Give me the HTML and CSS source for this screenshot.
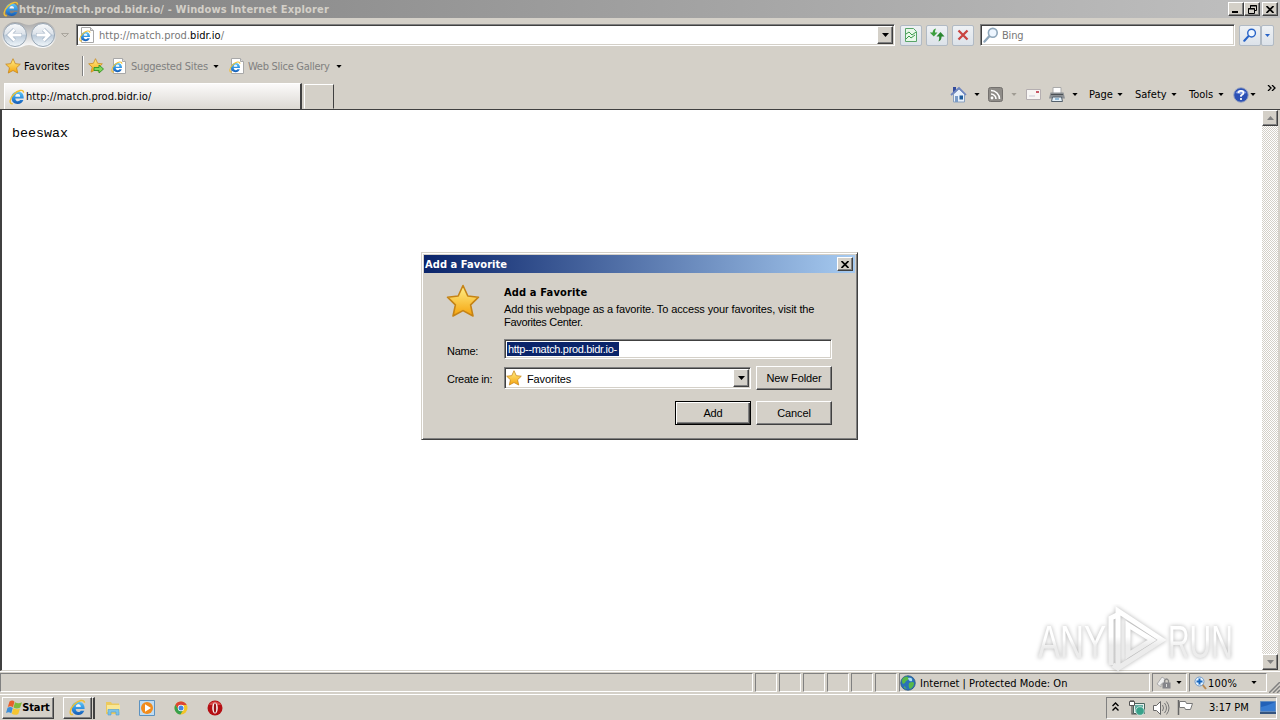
FILE: index.html
```html
<!DOCTYPE html>
<html lang="en">
<head>
    <meta charset="UTF-8">
    <title>http://match.prod.bidr.io/ - Windows Internet Explorer</title>
    <link rel="stylesheet" href="styles.css">
</head>
<body>
    <!-- Shared icons -->
    <svg class="defs" width="0" height="0">
        <defs>
            <linearGradient id="gold" x1="0" y1="0" x2="0" y2="1">
                <stop offset="0" stop-color="#fff08a"/>
                <stop offset="1" stop-color="#f5a30c"/>
            </linearGradient>
            <linearGradient id="blue" x1="0" y1="0" x2="0" y2="1">
                <stop offset="0" stop-color="#5cc8f8"/>
                <stop offset="0.6" stop-color="#2a88dc"/>
                <stop offset="1" stop-color="#1459b0"/>
            </linearGradient>
            <linearGradient id="disc" x1="0" y1="0" x2="0" y2="1">
                <stop offset="0" stop-color="#f8fafc"/>
                <stop offset="0.45" stop-color="#dde3ea"/>
                <stop offset="0.52" stop-color="#bccbda"/>
                <stop offset="1" stop-color="#f2f8fc"/>
            </linearGradient>
            <linearGradient id="plate" x1="0" y1="0" x2="0" y2="1">
                <stop offset="0" stop-color="#a8a8a8"/>
                <stop offset="1" stop-color="#fff"/>
            </linearGradient>
            <linearGradient id="fade" x1="0" y1="0" x2="0" y2="1">
                <stop offset="0.45" stop-color="#fff"/>
                <stop offset="0.6" stop-color="#ececec"/>
            </linearGradient>
        </defs>
        <symbol id="ie" viewBox="0 0 16 16">
            <path fill-rule="evenodd" d="M8.600 2.600C12.600 2.600 14.900 5.200 14.700 9.400H6.300C6.500 11.300 7.500 12.200 8.900 12.200C10 12.200 10.700 11.700 11.100 11H14.400C13.400 13.600 11.400 15 8.600 15C5 15 2.500 12.600 2.500 8.800C2.500 5 5 2.600 8.600 2.600ZM6.400 7.400H11.100C10.900 5.800 10 5 8.800 5S6.700 5.800 6.400 7.400Z" fill="url(#blue)"/>
            <path d="M6.400 7.400H11.100C10.900 5.800 10 5 8.800 5S6.700 5.800 6.400 7.400Z" fill="#f2f6fa"/>
            <path d="M3.800 14.600C-.4 15.400 .6 9.400 4.800 5.200C8.800 1.200 14.400 -.2 14.600 3.600" fill="none" stroke="#f0bf35" stroke-width="1.400"/>
        </symbol>
        <symbol id="page-ie" viewBox="0 0 16 16">
            <path d="M2.500 .5h9l3 3v12h-12z" fill="#fff" stroke="#a8a8a8"/>
            <path d="M11.500 .5v3h3" fill="#ddd" stroke="#a8a8a8"/>
            <use href="#ie" x="0" y="3" width="12" height="12"/>
        </symbol>
        <symbol id="star" viewBox="0 0 34 34">
            <path d="M17 1.500L21.800 12L32.500 13.200L24.600 20.800L27 32L17 26.600L7 32L9.400 20.800L1.500 13.200L12.200 12Z" fill="url(#gold)" stroke="#c58316" stroke-width="1.600" stroke-linejoin="round"/>
        </symbol>
        <symbol id="down" viewBox="0 0 7 4"><path d="M0 0h7L3.500 4z" fill="currentColor"/></symbol>
        <symbol id="up" viewBox="0 0 7 4"><path d="M0 4h7L3.500 0z" fill="currentColor"/></symbol>
        <symbol id="lens" viewBox="0 0 16 16">
            <path d="M1.500 14.500L6.500 9" stroke="currentColor" stroke-width="2.400" stroke-linecap="round"/>
            <circle cx="9.800" cy="5.800" r="4.400" fill="#eef6ff" stroke="currentColor" stroke-width="1.600"/>
        </symbol>
        <symbol id="close" viewBox="0 0 8 7"><path d="M.5 0L7.500 7M7.500 0L.5 7" stroke="#000" stroke-width="1.700"/></symbol>
    </svg>

    <div class="titlebar">
        <svg class="i16"><use href="#ie"/></svg>
        <span class="title-text">http://match.prod.bidr.io/ - Windows Internet Explorer</span>
        <div class="win-btn"><svg width="8" height="8"><path d="M0 7h6" stroke="#000" stroke-width="2"/></svg></div>
        <div class="win-btn"><svg width="9" height="9"><path d="M2.500 3V.5h6v5H7M2 1h7M.5 3.500h6v5h-6zM0 4h7" fill="none" stroke="#000"/></svg></div>
        <div class="win-btn win-close"><svg width="8" height="7"><use href="#close"/></svg></div>
    </div>

    <div class="navbar">
        <svg class="travel" width="72" height="28" viewBox="0 0 72 28">
            <path d="M14 1C22 1 22 4 28 4S34 1 42 1A13 13 0 0 1 42 27C34 27 34 24 28 24S22 27 14 27A13 13 0 0 1 14 1Z" fill="url(#plate)"/>
            <circle cx="14" cy="14" r="11.500" fill="url(#disc)" stroke="#98a6b4"/>
            <circle cx="42" cy="14" r="11.500" fill="url(#disc)" stroke="#98a6b4"/>
            <path d="M21 14H9M13.500 8.500L8 14l5.500 5.500M35 14h12M42.500 8.500L48 14l-5.500 5.500" fill="none" stroke="#a3b3c5" stroke-width="4.200"/>
            <path d="M20.500 14H9M13.500 8.500L8 14l5.500 5.500M35.500 14h12M42.500 8.500L48 14l-5.500 5.500" fill="none" stroke="#fff" stroke-width="2.800"/>
            <path d="M60.500 12.500h7l-3.500 3.500z" fill="#d4d0c8" stroke="#aaa69e"/>
        </svg>
        <div class="address sunken">
            <svg class="i16"><use href="#page-ie"/></svg>
            <span class="url">http://match.prod.<b>bidr.io</b>/</span>
            <div class="drop-btn"><svg class="arrow"><use href="#down"/></svg></div>
        </div>
        <div class="tool-btn"><svg width="14" height="16"><path d="M1.500 1.500h8l3 3v10h-11z" fill="#e9f8e9" stroke="#58a468"/><path d="M2 7l3-2 3 3 4-3M2 12l3-3 2 2 4-3" fill="none" stroke="#3b9a4a"/></svg></div>
        <div class="tool-btn"><svg width="16" height="14"><path d="M7 .5Q4 1 3.600 4.500H.8l4 4 3.700-4H6Q6 2.500 7 .5z" fill="#3d9f3f"/><path d="M9.500 13.500Q12.500 12.500 12.600 8.500H15.500l-4-4.500L7.500 8.500h2.700Q10.500 11 9.500 13.500z" fill="#2a8630"/></svg></div>
        <div class="tool-btn"><svg width="12" height="12"><path d="M1.500 1.500l9 9M10.500 1.500l-9 9" stroke="#c94440" stroke-width="2.300"/></svg></div>
        <div class="search sunken">
            <svg class="i16"><use href="#lens"/></svg>
            <span>Bing</span>
        </div>
        <div class="tool-btn search-go"><svg width="14" height="14"><use href="#lens"/></svg></div>
        <div class="tool-btn search-more"><svg width="5" height="3"><use href="#down"/></svg></div>
    </div>

    <div class="favbar">
        <svg class="i16"><use href="#star"/></svg>
        <span class="fav-label">Favorites</span>
        <div class="fav-sep"></div>
        <svg class="i16 fav-add" viewBox="0 0 16 16"><use href="#star" width="15" height="15"/><path d="M6 9.500h5V7l4.500 4-4.500 4v-2.500H6z" fill="#7fd65a" stroke="#2f9324" stroke-width=".9"/></svg>
        <svg class="i16"><use href="#page-ie"/></svg>
        <span class="fav-link suggested">Suggested Sites</span>
        <svg class="arrow small"><use href="#down"/></svg>
        <svg class="i16 slice"><use href="#page-ie"/></svg>
        <span class="fav-link gallery">Web Slice Gallery</span>
        <svg class="arrow small"><use href="#down"/></svg>
    </div>

    <div class="tabbar">
        <div class="tab"><svg class="i16"><use href="#ie"/></svg><span>http://match.prod.bidr.io/</span></div>
        <div class="new-tab"></div>
        <div class="commands">
            <svg class="cmd-home" width="17" height="17" viewBox="0 0 17 17"><path d="M3 1h3v6H3z" fill="#334b9c"/><path d="M3.500 8v8h11V8L9 3z" fill="#e9f1fb" stroke="#8aa0bd"/><path d="M1 9l8-7 7 7" fill="none" stroke="#6f86c0" stroke-width="1.700"/><path d="M5 10h3v6H5z" fill="#7a9cc8"/><path d="M9.500 9.500h3.500v4H9.500z" fill="#1f5c9c"/></svg>
            <svg class="arrow small"><use href="#down"/></svg>
            <svg class="cmd-rss" width="15" height="15"><rect x=".5" y=".5" width="14" height="14" rx="2" fill="#8f8c88" stroke="#74716e"/><path d="M3 7a5 5 0 0 1 5 5M3 3.500A8.500 8.500 0 0 1 11.500 12" fill="none" stroke="#fff" stroke-width="1.600"/><circle cx="4" cy="11" r="1.400" fill="#fff"/></svg>
            <svg class="arrow small muted"><use href="#down"/></svg>
            <svg class="cmd-mail" width="15" height="11"><path d="M.5 .5h14v10H.5z" fill="#f8f6f4" stroke="#b4aeb0"/><path d="M10 2h3v2h-3z" fill="#c85a68"/><path d="M3 7h6" stroke="#c9c9d4"/></svg>
            <svg class="cmd-print" width="16" height="15"><path d="M4 .5h8v6H4z" fill="#fff" stroke="#aaa"/><path d="M1.500 5.500h13l1.500 6H0z" fill="#8c9094"/><path d="M2 7.500h12" stroke="#4c5155"/><path d="M3.500 10h9l1 4.500h-11z" fill="#e4f0f8" stroke="#55616c"/><path d="M6 12h4" stroke="#4686b5"/></svg>
            <svg class="arrow small"><use href="#down"/></svg>
            <span class="cmd page">Page</span><svg class="arrow small"><use href="#down"/></svg>
            <span class="cmd safety">Safety</span><svg class="arrow small"><use href="#down"/></svg>
            <span class="cmd tools">Tools</span><svg class="arrow small"><use href="#down"/></svg>
            <svg class="cmd-help" width="16" height="16" viewBox="0 0 16 16"><circle cx="8" cy="8" r="7.300" fill="#2c51b5" stroke="#a0a9c0"/><path d="M2.500 6A6 5 0 0 1 13.500 6Q8 8 2.500 6" fill="#7f9be4"/><path d="M5.500 6Q5.500 3.800 8 3.800T10.500 6Q10.500 7.200 8 8.600V9.800M8 11v2" fill="none" stroke="#fff" stroke-width="1.700"/></svg>
            <svg class="arrow small"><use href="#down"/></svg>
            <svg class="chevrons" width="9" height="6"><path d="M1 0l3 3-3 3M5 0l3 3-3 3" fill="none" stroke="#000" stroke-width="1.300"/></svg>
        </div>
    </div>

    <div class="viewport">
        <pre class="document">beeswax</pre>
        <div class="scrollbar">
            <div class="scroll-btn"><svg class="arrow"><use href="#up"/></svg></div>
            <div class="scroll-btn"><svg class="arrow"><use href="#down"/></svg></div>
        </div>
        <svg class="watermark" width="210" height="76" viewBox="0 0 210 76">
            <g class="mark">
                <text transform="translate(7 54) scale(.72 1)">ANY</text>
                <text transform="translate(137 54) scale(.65 1)">RUN</text>
                <path d="M80 61V14l6-3M87 63V7l44 29-44 28-5-3M97 21v30l24-15z"/>
            </g>
        </svg>
    </div>

    <div class="statusbar">
        <div class="pane main"></div>
        <div class="pane"></div><div class="pane"></div><div class="pane"></div>
        <div class="pane"></div><div class="pane"></div><div class="pane"></div>
        <div class="pane zone">
            <svg class="i16" viewBox="0 0 16 16"><circle cx="8" cy="8" r="7.300" fill="#2a72b8" stroke="#26517c" stroke-width=".7"/><path d="M3 3q4-3 6 0 0 2-3 3-1 3-3 3-2-3 0-6M9 8q4-2 5 0 0 4-4 6-2-2-1-6M4 11l3 3-3-1z" fill="#58b848"/><path d="M8 3q5-1 4 3-3 1-4-3" fill="#a9dcf5"/></svg>
            <span>Internet | Protected Mode: On</span>
        </div>
        <div class="pane lock">
            <svg width="16" height="15"><path d="M1 9l5-7 3 2v5H5v3z" fill="#eee" stroke="#aaa"/><path d="M8.500 8V5.500q2-3 4 0V8" fill="none" stroke="#888" stroke-width="1.300"/><path d="M6.500 7.500h8v6h-8z" fill="#85858a"/><path d="M10.500 9v3" stroke="#ddd"/></svg>
            <svg class="arrow small"><use href="#down"/></svg>
        </div>
        <div class="pane zoom">
            <svg width="13" height="14"><path d="M8 8l4 5" stroke="#b98a55" stroke-width="2"/><circle cx="5.500" cy="5.500" r="4.500" fill="#e5f3ff" stroke="#7199c7"/><path d="M5.500 2.500v6M2.500 5.500h6" stroke="#1766bd" stroke-width="2"/></svg>
            <span>100%</span>
            <svg class="arrow small"><use href="#down"/></svg>
        </div>
        <svg class="grip" width="11" height="11"><path d="M0 11L11 0M4 11l7-7M8 11l3-3" stroke="#808080" stroke-width="1.500"/></svg>
    </div>

    <div class="taskbar">
        <div class="start raised">
            <svg width="16" height="16" viewBox="0 0 16 16"><path d="M3.500 1.500q3-2 5 .3L7 7.300Q4.500 5.200 1.800 7z" fill="#e8602c"/><path d="M9 2.200q3.500 2 7 0L14.200 7.500q-3.500 2-6.700 0z" fill="#7fbb3c"/><path d="M1.500 7.700Q4.500 6.200 6.800 8L5.300 13.300Q3 11.500 0 13z" fill="#3c8ed8"/><path d="M7.300 8.300q3.500 2 6.700.2L12.300 14q-3.500 1.800-6.500-.2z" fill="#f6c531"/></svg>
            <span>Start</span>
        </div>
        <div class="task raised"><svg width="17" height="17"><use href="#ie"/></svg></div>
        <div class="task-stack"></div>
        <svg class="i16 explorer" viewBox="0 0 16 16"><path d="M1 2h5l1 1.500h7V14H1z" fill="#ecc95d"/><path d="M2 5h13v7H2z" fill="#f9e795"/><path d="M3 15V9.500h11V15h-3v-3H6v3z" fill="#7cc3e8" stroke="#539ccc" stroke-width=".6"/></svg>
        <svg class="i16" viewBox="0 0 16 16"><path d="M.5 .5h15v15H.5z" fill="#c0dcf2" stroke="#5c92c0"/><circle cx="8" cy="8" r="6" fill="#f28c1c"/><path d="M6 4.200v7.600L12 8z" fill="#fff"/></svg>
        <svg class="i16" viewBox="0 0 16 16"><circle cx="8" cy="8" r="6.500" fill="#f2c429"/><path d="M2.400 4.700A6.500 6.500 0 0 1 13.700 5H8v3L5.400 9.500z" fill="#dc4434"/><path d="M2.400 4.700A6.500 6.500 0 0 0 7.400 14.500L10.500 9.500H5.400z" fill="#37a04c"/><circle cx="8" cy="8" r="3.200" fill="#fff"/><circle cx="8" cy="8" r="2.500" fill="#4285e4"/></svg>
        <svg class="i16" viewBox="0 0 16 16"><circle cx="8" cy="8" r="7.500" fill="#b50f14"/><path d="M2 5a7 7 0 0 1 12 0z" fill="#d94a4a"/><ellipse cx="8" cy="8" rx="2.800" ry="5.500" fill="#f8f0f0"/><ellipse cx="8" cy="8" rx="1.200" ry="4.700" fill="#981015"/></svg>
        <div class="tray">
            <svg class="tray-up" width="7" height="9"><path d="M.5 4l3-3 3 3M.5 8.500l3-3 3 3" fill="none" stroke="#000" stroke-width="1.400"/></svg>
            <svg class="tray-net" width="16" height="16"><path d="M4.500 3.500h11v10h-11z" fill="#e8f0ee" stroke="#47665f"/><path d="M6 5h8v7H6z" fill="#63ada2"/><path d="M.5 1.500h5v4h-5z" fill="#fff" stroke="#555"/><path d="M3 5v9h6M2 0v2M4 0v2" fill="none" stroke="#555" stroke-width="1.200"/><circle cx="11" cy="11" r="4.300" fill="#38a28a" stroke="#e4f1ec" stroke-width=".7"/></svg>
            <svg class="tray-vol" width="17" height="16"><path d="M.5 5.500h3l4-4v13l-4-4h-3z" fill="#fff" stroke="#666"/><path d="M9.500 5q2 3 0 6M11.500 3q4 5 0 10M13.500 1.500q5 6.500 0 13" fill="none" stroke="#777"/></svg>
            <svg class="tray-flag" width="16" height="15"><path d="M1.500 0v15" stroke="#666" stroke-width="1.500"/><path d="M2.500 1.500h6l1 2h6l-2 6h-5l-1-2h-5z" fill="#fff" stroke="#777"/></svg>
            <span class="clock">3:17 PM</span>
            <svg width="16" height="13"><path d="M.5 .5h15v10H.5z" fill="#2361b7" stroke="#638cbd"/><path d="M1 6q8-2 14-5v9H1z" fill="#387bd0"/><path d="M0 12h16" stroke="#34547e" stroke-width="2"/></svg>
        </div>
    </div>

    <div class="dialog">
        <div class="dialog-title">
            <span>Add a Favorite</span>
            <div class="win-btn"><svg width="8" height="7"><use href="#close"/></svg></div>
        </div>
        <div class="dialog-body">
            <div class="intro">
                <svg width="34" height="34"><use href="#star"/></svg>
                <div>
                    <div class="heading">Add a Favorite</div>
                    <div class="hint">Add this webpage as a favorite. To access your favorites, visit the<br><span class="hint-end">Favorites Center.</span></div>
                </div>
            </div>
            <div class="row name-row">
                <label>Name:</label>
                <div class="field sunken"><span class="selected">http--match.prod.bidr.io-</span></div>
            </div>
            <div class="row folder-row">
                <label>Create in:</label>
                <div class="select sunken">
                    <svg class="i16"><use href="#star"/></svg>
                    <span>Favorites</span>
                    <div class="drop-btn"><svg class="arrow"><use href="#down"/></svg></div>
                </div>
                <div class="btn raised"><span>New Folder</span></div>
            </div>
            <div class="row actions">
                <div class="btn raised default"><span>Add</span></div>
                <div class="btn raised"><span>Cancel</span></div>
            </div>
        </div>
    </div>
</body>
</html>
```
FILE: styles.css
```css
* {
    box-sizing: border-box;
}

body {
    margin: 0;
    width: 1280px;
    height: 720px;
    overflow: hidden;
    display: flex;
    flex-direction: column;
    position: relative;
    background: #d4d0c8;
    color: #000;
    font: 11px/14px "DejaVu Sans Condensed", "DejaVu Sans", sans-serif;
    white-space: nowrap;
}

svg {
    display: block;
    flex: none;
}

.defs {
    position: absolute;
}

.i16 {
    width: 16px;
    height: 16px;
}

.arrow {
    width: 7px;
    height: 4px;
}

.arrow.small {
    width: 6px;
    height: 3px;
}

.muted {
    color: #a09c94;
}

.sunken {
    background: #fff;
    border: 1px solid;
    border-color: #808080 #fff #fff #808080;
    box-shadow: inset 1px 1px #404040, inset -1px -1px #d4d0c8;
}

.raised,
.win-btn,
.drop-btn,
.scroll-btn {
    background: #d4d0c8;
    border: 1px solid;
    border-color: #fff #404040 #404040 #fff;
    box-shadow: inset -1px -1px #808080;
    display: flex;
    align-items: center;
    justify-content: center;
    flex: none;
}

/* Title bar */
.titlebar {
    height: 18px;
    flex: none;
    display: flex;
    align-items: center;
    padding: 0 2px 0 3px;
    background: linear-gradient(90deg, #808080, #c0c0c0);
    color: #d4d0c8;
    font-weight: bold;
}

.title-text {
    flex: 1;
    padding-top: 1px;
    letter-spacing: 0.15px;
}

.win-btn {
    width: 16px;
    height: 14px;
}

.win-close {
    margin-left: 2px;
}

/* Address row */
.navbar {
    height: 34px;
    flex: none;
    display: flex;
    align-items: center;
    padding-left: 1px;
}

.travel {
    margin-right: 3px;
}

.address {
    width: 819px;
    height: 22px;
    display: flex;
    align-items: center;
    padding: 1px 1px 1px 2px;
    margin-right: 5px;
}

.url {
    flex: 1;
    margin-left: 4px;
    padding-top: 2px;
    letter-spacing: 0.04px;
    color: #777;
}

.url b {
    font-weight: normal;
    color: #000;
}

.drop-btn {
    width: 16px;
    height: 18px;
}

.tool-btn {
    width: 22px;
    height: 21px;
    margin-right: 4px;
    display: flex;
    align-items: center;
    justify-content: center;
    flex: none;
    border: 1px solid #b1bac4;
    border-radius: 2px;
    background: linear-gradient(#eef1f4, #dce2e9);
}

.search {
    width: 255px;
    height: 22px;
    margin: 0 4px 0 2px;
    display: flex;
    align-items: center;
    padding-left: 2px;
    color: #777;
}

.search svg {
    color: #8fa7bb;
    margin-right: 3px;
}

.search span {
    padding-top: 2px;
    letter-spacing: -0.2px;
}

.search-go {
    margin: 0;
    color: #2763c7;
}

.search-more {
    width: 13px;
    margin: 0;
    color: #2763c7;
}

/* Favorites bar */
.favbar {
    height: 28px;
    flex: none;
    display: flex;
    align-items: center;
    padding-left: 5px;
}

.fav-label {
    width: 58px;
    margin-left: 3px;
    padding-top: 1px;
    letter-spacing: 0.1px;
}

.fav-sep {
    width: 2px;
    height: 20px;
    border-left: 1px solid #808080;
    border-right: 1px solid #fff;
}

.fav-add {
    margin: 0 7px 0 4px;
}

.fav-link {
    margin-left: 4px;
    padding-top: 2px;
    color: #808080;
    letter-spacing: -0.2px;
}

.suggested {
    width: 82px;
}

.gallery {
    width: 88px;
    margin-left: 3px;
    letter-spacing: -0.28px;
}

.slice {
    margin-left: 10px;
}

/* Tabs and command bar */
.tabbar {
    height: 29px;
    flex: none;
    display: flex;
    align-items: flex-end;
    padding-left: 4px;
}

.tab {
    width: 298px;
    height: 26px;
    display: flex;
    align-items: center;
    padding-left: 4px;
    border-top: 1px solid #fff;
    border-left: 1px solid #fff;
    border-right: 2px solid #404040;
    background: linear-gradient(#fbfafa, #dcd9d3);
}

.tab span {
    margin-left: 1px;
    letter-spacing: 0.05px;
}

.new-tab {
    width: 30px;
    height: 25px;
    margin-left: 2px;
    border: 1px solid;
    border-color: #fff #404040 transparent #fff;
}

.commands {
    flex: 1;
    height: 29px;
    display: flex;
    align-items: center;
    padding-left: 616px;
}

.cmd-home {
    margin-right: 7px;
}

.cmd-rss {
    margin: 0 8px 0 8px;
}

.cmd-mail {
    margin: 0 8px 0 9px;
}

.cmd-print {
    margin-right: 7px;
}

.cmd {
    margin-left: 11px;
}

.page {
    width: 28px;
}

.safety {
    width: 36px;
    margin-left: 12px;
}

.tools {
    width: 29px;
    margin-left: 12px;
}

.cmd-help {
    margin: 0 1px 0 9px;
}

.chevrons {
    margin: 0 0 13px 11px;
}

/* Page area */
.viewport {
    height: 562px;
    flex: none;
    display: flex;
    position: relative;
    background: #fff;
    border-top: 1px solid #404040;
    border-left: 2px solid #404040;
    border-bottom: 1px solid #d4d0c8;
}

.document {
    flex: 1;
    margin: 16px 0 0 10px;
    font: 13.33px/15px "Liberation Mono", monospace;
}

.scrollbar {
    width: 18px;
    display: flex;
    flex-direction: column;
    justify-content: space-between;
    border-right: 2px solid #d4d0c8;
    background: repeating-conic-gradient(#fff 0 25%, #d4d0c8 0 50%) 0 0 / 2px 2px;
}

.scroll-btn {
    width: 16px;
    height: 16px;
    color: #808080;
}

.watermark {
    position: absolute;
    left: 1029px;
    top: 494px;
}

.mark {
    font: 46px "Liberation Sans", sans-serif;
    fill: url(#fade);
    filter: drop-shadow(0 0 2px rgba(0, 0, 0, 0.3));
}

.mark path {
    fill: none;
    stroke: url(#fade);
    stroke-width: 5;
}

/* Status bar */
.statusbar {
    height: 23px;
    flex: none;
    display: flex;
    align-items: center;
    gap: 2px;
    border-top: 1px solid #fff;
    border-bottom: 1px solid #d4d0c8;
}

.pane {
    width: 22px;
    height: 19px;
    display: flex;
    align-items: center;
    flex: none;
    border: 1px solid;
    border-color: #808080 #fff #fff #808080;
}

.main {
    width: 753px;
}

.zone {
    width: 251px;
}

.zone span {
    margin-left: 4px;
    padding-top: 2px;
    letter-spacing: 0.02px;
}

.lock {
    width: 35px;
    padding-left: 3px;
    gap: 4px;
}

.zoom {
    width: 78px;
    padding-left: 4px;
}

.zoom span {
    width: 43px;
    margin-left: 1px;
    padding-top: 2px;
    letter-spacing: 0.2px;
}

.grip {
    align-self: flex-end;
}

/* Taskbar */
.taskbar {
    height: 26px;
    flex: none;
    display: flex;
    align-items: center;
    padding-left: 2px;
    border-top: 1px solid #fff;
}

.start {
    width: 52px;
    height: 22px;
    font-weight: bold;
}

.start span {
    letter-spacing: -0.15px;
}

.task {
    width: 29px;
    height: 22px;
    margin-left: 9px;
}

.task-stack {
    width: 3px;
    height: 22px;
    border-top: 1px solid #fff;
    border-right: 2px solid #404040;
}

.taskbar > .i16 {
    margin-right: 18px;
}

.taskbar > .explorer {
    margin-left: 10px;
}

.tray {
    width: 171px;
    height: 22px;
    margin: 0 3px 0 auto;
    padding-left: 5px;
    display: flex;
    align-items: center;
    border: 1px solid;
    border-color: #808080 #fff #fff #808080;
}

.tray-up {
    margin-bottom: 3px;
}

.tray-net {
    margin-left: 10px;
}

.tray-vol {
    margin-left: 8px;
}

.tray-flag {
    margin-left: 7px;
}

.clock {
    width: 51px;
    margin-left: 16px;
}

/* Add a Favorite dialog */
.dialog {
    position: absolute;
    left: 421px;
    top: 252px;
    width: 437px;
    height: 188px;
    padding: 2px;
    background: #d4d0c8;
    border: 1px solid;
    border-color: #d4d0c8 #404040 #404040 #d4d0c8;
    box-shadow: inset 1px 1px #fff, inset -1px -1px #808080;
    font: 11px/13px "Liberation Sans", Arial, sans-serif;
    letter-spacing: -0.11px;
}

.dialog-title {
    height: 18px;
    display: flex;
    align-items: center;
    justify-content: space-between;
    padding: 0 2px 0 1px;
    background: linear-gradient(90deg, #0a246a, #a6caf0);
    color: #fff;
    font: bold 11px/14px "DejaVu Sans Condensed", sans-serif;
    letter-spacing: 0.07px;
}

.dialog-title span {
    padding-top: 1px;
}

.dialog-body {
    padding: 12px 23px 0 22px;
}

.intro {
    display: flex;
    height: 54px;
}

.intro > svg {
    margin-top: -1px;
}

.intro > div {
    margin-left: 24px;
}

.heading {
    margin: 1px 0 4px;
    font: bold 11px/13px "DejaVu Sans Condensed", sans-serif;
    letter-spacing: 0.15px;
}

.hint-end {
    letter-spacing: -0.3px;
}

.row {
    display: flex;
    align-items: center;
}

.row label {
    width: 58px;
    padding-left: 1px;
    letter-spacing: -0.25px;
}

.name-row label {
    padding-top: 4px;
}

.field {
    width: 328px;
    height: 20px;
    padding: 2px;
}

.selected {
    display: block;
    width: 112px;
    height: 14px;
    padding-left: 1px;
    background: #0a246a;
    color: #fff;
    line-height: 14px;
    letter-spacing: -0.32px;
}

.folder-row {
    margin-top: 7px;
}

.folder-row label {
    padding-top: 2px;
}

.select {
    width: 247px;
    height: 22px;
    margin-right: 5px;
    padding: 1px;
    display: flex;
    align-items: center;
}

.select span {
    flex: 1;
    margin-left: 5px;
    padding-top: 2px;
}

.btn {
    width: 76px;
    height: 24px;
}

.actions {
    margin-top: 11px;
    justify-content: flex-end;
    gap: 5px;
}

.default {
    border-color: #000;
    box-shadow: inset 1px 1px #fff, inset -1px -1px #404040, inset -2px -2px #808080;
}
```
